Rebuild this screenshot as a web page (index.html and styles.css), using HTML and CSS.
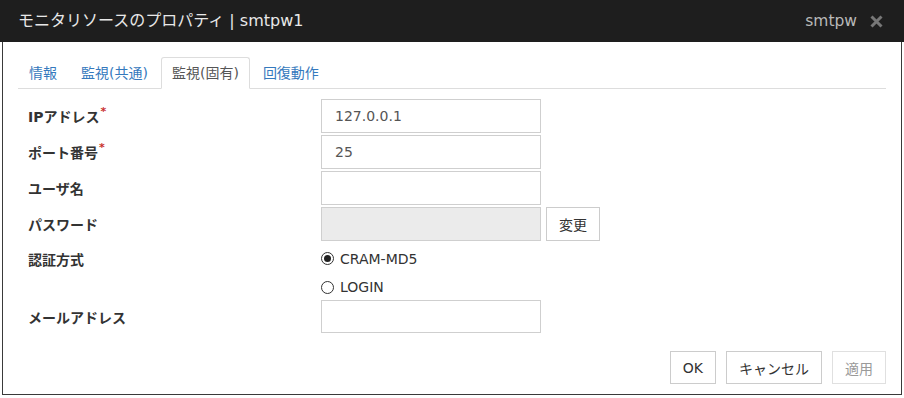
FILE: index.html
```html
<!DOCTYPE html>
<html lang="ja">
<head>
<meta charset="utf-8">
<title>モニタリソースのプロパティ</title>
<link rel="stylesheet" href="styles.css">
</head>
<body>
<div class="dialog">
  <div class="header">
    <div class="title">モニタリソースのプロパティ | smtpw1</div>
    <div class="header-right">
      <span class="hname">smtpw</span>
      <svg class="close" width="13" height="13" viewBox="0 0 13 13"><path d="M1.5 1.5L11.5 11.5M11.5 1.5L1.5 11.5" stroke="#777777" stroke-width="3" stroke-linecap="butt"/></svg>
    </div>
  </div>
  <div class="body">
    <ul class="tabs">
      <li class="tab">情報</li>
      <li class="tab">監視(共通)</li>
      <li class="tab active">監視(固有)</li>
      <li class="tab">回復動作</li>
    </ul>
    <div class="form">
      <div class="label r34">IPアドレス<span class="req">*</span></div>
      <div class="field r34"><div class="input">127.0.0.1</div></div>

      <div class="label r34">ポート番号<span class="req">*</span></div>
      <div class="field r34"><div class="input">25</div></div>

      <div class="label r34">ユーザ名</div>
      <div class="field r34"><div class="input"></div></div>

      <div class="label r34">パスワード</div>
      <div class="field r34"><div class="input disabled"></div><div class="btn change">変更</div></div>

      <div class="label r31">認証方式</div>
      <div class="field r31"><span class="radio checked"></span><span class="rtext">CRAM-MD5</span></div>

      <div class="label r22"></div>
      <div class="field r22"><span class="radio"></span><span class="rtext">LOGIN</span></div>

      <div class="label r33">メールアドレス</div>
      <div class="field r33"><div class="input"></div></div>
    </div>
    <div class="footer">
      <div class="btn fbtn">OK</div>
      <div class="btn fbtn">キャンセル</div>
      <div class="btn fbtn disabled-btn">適用</div>
    </div>
  </div>
</div>
</body>
</html>
```
FILE: styles.css
```css
* { box-sizing: border-box; }
html, body { margin: 0; padding: 0; background: #fff; }
body {
  font-family: "DejaVu Sans", "Noto Sans CJK JP", sans-serif;
  color: #333;
  font-size: 14px;
}
.dialog { width: 904px; }
.header {
  height: 42px;
  background: #1e1e1e;
  display: flex;
  align-items: center;
  justify-content: space-between;
  padding: 0 21px 0 18px;
}
.title { color: #e8e8e8; font-size: 16px; line-height: 20px; white-space: nowrap; }
.header-right { display: flex; align-items: center; gap: 13px; }
.hname { color: #b9b9b9; font-size: 15.5px; line-height: 20px; }
.close { display: block; }
.body {
  margin: 0 2px;
  border: 1px solid #3a3a3a;
  border-top: none;
  padding: 15px 15px 10px 15px;
}
.tabs {
  list-style: none;
  margin: 0;
  padding: 0;
  display: flex;
  border-bottom: 1px solid #dddddd;
}
.tab {
  color: #3579bd;
  font-size: 14px;
  line-height: 20px;
  padding: 5px 10px;
  border: 1px solid transparent;
  margin-right: 2px;
  margin-bottom: -1px;
  border-radius: 3px 3px 0 0;
  white-space: nowrap;
}
.tab.active {
  color: #555;
  border-color: #dddddd;
  border-bottom-color: #fff;
  background: #fff;
}
.form {
  margin-top: 10px;
  padding-left: 10px;
  display: grid;
  grid-template-columns: 293px 1fr;
  row-gap: 2px;
}
.label {
  font-weight: bold;
  font-size: 14px;
  color: #333;
  display: flex;
  align-items: center;
  white-space: nowrap;
}
.r34 { height: 34px; }
.r31 { height: 31px; }
.r22 { height: 22px; }
.r33 { height: 33px; }
.req {
  color: #c9302c;
  font-size: 11px;
  align-self: flex-start;
  margin-top: 6px;
  margin-left: 1px;
  font-weight: bold;
}
.field { display: flex; align-items: center; }
.input {
  width: 220px;
  height: 100%;
  border: 1px solid #cfcfcf;
  padding: 0 13px;
  display: flex;
  align-items: center;
  color: #555;
  font-size: 14px;
}
.input.disabled { background: #ebebeb; }
.btn {
  border: 1px solid #cccccc;
  background: #fff;
  color: #333;
  font-size: 14px;
  display: flex;
  align-items: center;
  justify-content: center;
  padding: 0 12px;
  white-space: nowrap;
}
.change { height: 34px; margin-left: 5px; }
.radio {
  width: 13px;
  height: 13px;
  border: 1px solid #333;
  border-radius: 50%;
  display: flex;
  align-items: center;
  justify-content: center;
  margin-right: 6px;
}
.radio.checked::after {
  content: "";
  width: 7px;
  height: 7px;
  border-radius: 50%;
  background: #222;
}
.rtext { font-size: 14px; color: #333; }
.footer {
  margin-top: 18px;
  display: flex;
  justify-content: flex-end;
  gap: 10px;
}
.fbtn { height: 33px; }
.disabled-btn { color: #9a9a9a; border-color: #e0e0e0; }
```
